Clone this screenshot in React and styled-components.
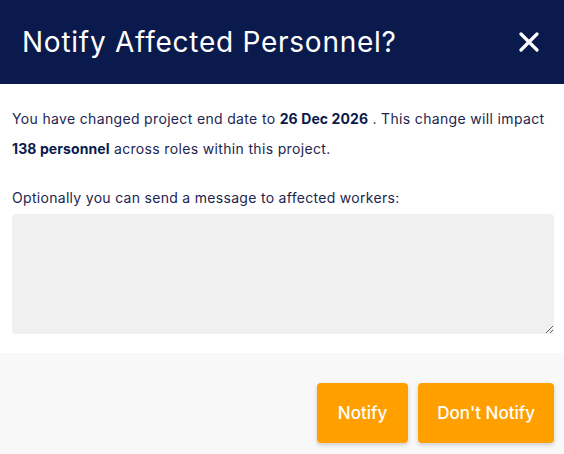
import React from "react";
import styled, { createGlobalStyle } from "styled-components";

const Global = createGlobalStyle`
  html, body { margin: 0; padding: 0; background: #ffffff; }
  body { font-family: "Inter", "Open Sans", sans-serif; }
  * { box-sizing: border-box; }
`;

const Dialog = styled.div`
  width: 564px;
  height: 454px;
  display: flex;
  flex-direction: column;
  background: #ffffff;
  overflow: hidden;
`;

const Header = styled.div`
  height: 84px;
  flex: none;
  background: #0b1a4c;
  display: flex;
  align-items: center;
  justify-content: space-between;
  padding: 0 25px 0 22px;
`;

const Title = styled.h1`
  margin: 0;
  color: #ffffff;
  font-size: 28px;
  font-weight: 400;
  letter-spacing: 0.75px;
`;

const CloseButton = styled.button`
  border: 0;
  background: none;
  padding: 0;
  width: 20px;
  height: 20px;
  display: flex;
  cursor: pointer;
`;

const Body = styled.div`
  padding: 20px 10px 19px 12px;
  color: #1c2550;
`;

const Message = styled.p`
  margin: 0 0 24px;
  font-size: 14px;
  line-height: 30px;
  letter-spacing: 0.34px;
`;

const Strong = styled.b`
  font-weight: 700;
  color: #0b1a4c;
  letter-spacing: 0.1px;
`;

const Label = styled.label`
  display: block;
  font-size: 14px;
  line-height: 20px;
  letter-spacing: 0.3px;
  margin-bottom: 6px;
`;

const TextArea = styled.textarea`
  display: block;
  width: 100%;
  height: 120px;
  border: 0;
  border-radius: 4px;
  background: #f0f0f0;
  resize: vertical;
  font: inherit;
  outline: none;
`;

const Footer = styled.div`
  flex: 1;
  background: #f8f8f8;
  display: flex;
  justify-content: flex-end;
  align-items: flex-start;
  gap: 10px;
  padding: 30px 10px 0 0;
`;

const Button = styled.button`
  height: 60px;
  padding: 0 ${(p) => p.$pad}px;
  border: 0;
  border-radius: 4px;
  background: #ffa000;
  color: #ffffff;
  font-family: inherit;
  font-size: 17px;
  font-weight: 500;
  box-shadow: 0 2px 4px rgba(0, 0, 0, 0.18);
  cursor: pointer;
`;

export default function App() {
  return (
    <>
      <Global />
      <Dialog>
        <Header>
          <Title>Notify Affected Personnel?</Title>
          <CloseButton aria-label="Close">
            <svg width="20" height="20" viewBox="0 0 20 20">
              <path d="M2 2 L18 18 M18 2 L2 18" stroke="#ffffff" strokeWidth="3.2" strokeLinecap="round" />
            </svg>
          </CloseButton>
        </Header>
        <Body>
          <Message>
            You have changed project end date to <Strong>26 Dec 2026</Strong> . This change will impact{" "}
            <Strong>138 personnel</Strong> across roles within this project.
          </Message>
          <Label>Optionally you can send a message to affected workers:</Label>
          <TextArea />
        </Body>
        <Footer>
          <Button $pad={21}>Notify</Button>
          <Button $pad={19}>Don't Notify</Button>
        </Footer>
      </Dialog>
    </>
  );
}
